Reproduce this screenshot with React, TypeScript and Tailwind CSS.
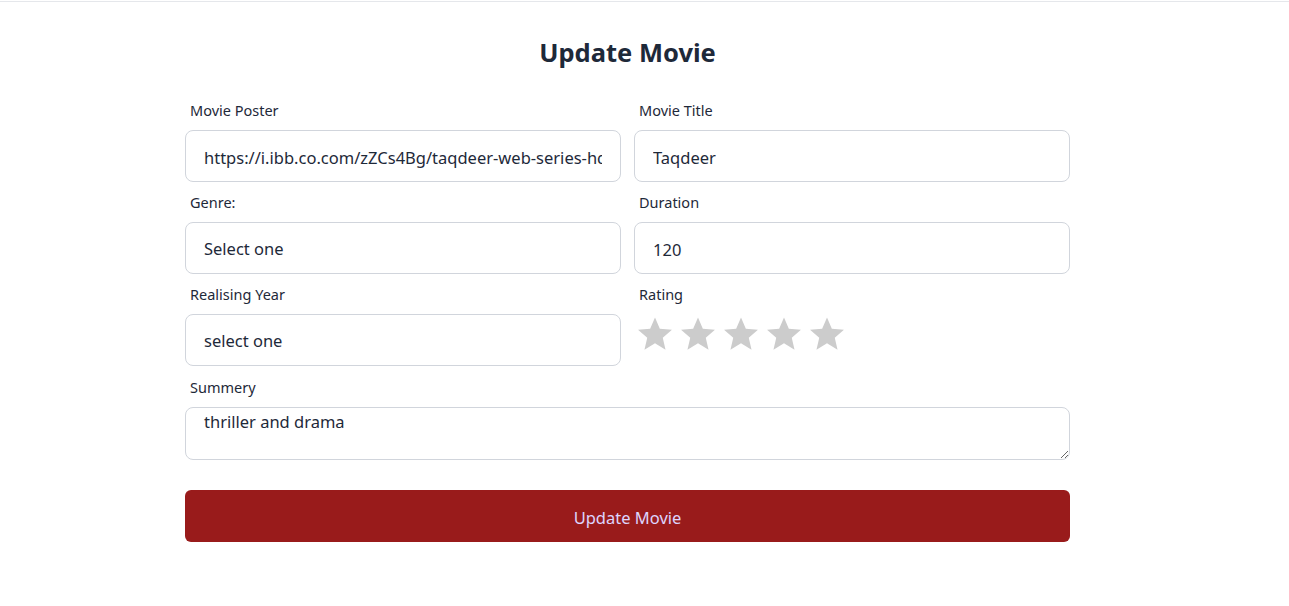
import React, { useState } from 'react';

const Star: React.FC<{ filled: boolean; onClick: () => void }> = ({ filled, onClick }) => (
  <button type="button" onClick={onClick} className="p-0 leading-none">
    <svg viewBox="0 0 24 24" className="w-[38px] h-[38px]">
      <path
        d="M12 1.6l3.05 7.05 7.65.68-5.8 5.05 1.75 7.5L12 17.9l-6.65 3.98 1.75-7.5-5.8-5.05 7.65-.68z"
        fill={filled ? '#f59e0b' : '#cccccc'}
      />
    </svg>
  </button>
);

const App: React.FC = () => {
  const [rating, setRating] = useState<number>(0);

  const inputClass =
    'w-full h-[52px] px-[18px] pt-[2px] border border-gray-300 rounded-lg text-[16.5px] text-gray-800 bg-white focus:outline-none';
  const labelClass = 'block text-[14.5px] leading-5 text-gray-800 px-[5px]';

  return (
    <div className="min-h-screen bg-white" style={{ fontFamily: '"Noto Sans", "Open Sans", sans-serif' }}>
      <div className="h-px mt-px bg-gray-200" />

      <div className="w-[885px] ml-[185px] pt-[34px] pb-16">
        <h1 className="text-[25.5px] font-bold text-gray-800 text-center leading-8">Update Movie</h1>

        <form className="mt-8" onSubmit={(e) => e.preventDefault()}>
          <div className="grid grid-cols-2 gap-x-[13px] gap-y-[10px]">
            {/* Movie Poster */}
            <div>
              <label className={`${labelClass} mb-[10px]`}>Movie Poster</label>
              <input
                type="text"
                defaultValue="https://i.ibb.co.com/zZCs4Bg/taqdeer-web-series-hd-poster.jpg"
                className={inputClass}
              />
            </div>

            {/* Movie Title */}
            <div>
              <label className={`${labelClass} mb-[10px]`}>Movie Title</label>
              <input type="text" defaultValue="Taqdeer" className={inputClass} />
            </div>

            {/* Genre */}
            <div>
              <label className={`${labelClass} mb-[10px]`}>Genre:</label>
              <div className={`${inputClass} flex items-center`}>Select one</div>
            </div>

            {/* Duration */}
            <div>
              <label className={`${labelClass} mb-[10px]`}>Duration</label>
              <input type="text" defaultValue="120" className={inputClass} />
            </div>

            {/* Realising Year */}
            <div>
              <label className={`${labelClass} mb-[10px]`}>Realising Year</label>
              <div className={`${inputClass} flex items-center`}>select one</div>
            </div>

            {/* Rating */}
            <div>
              <label className={`${labelClass} mb-[11px]`}>Rating</label>
              <div className="flex items-center gap-[5px] pl-[2px]">
                {[1, 2, 3, 4, 5].map((n) => (
                  <Star key={n} filled={n <= rating} onClick={() => setRating(n)} />
                ))}
              </div>
            </div>
          </div>

          {/* Summery */}
          <div className="mt-[11px]">
            <label className={`${labelClass} mb-[10px]`}>Summery</label>
            <textarea
              defaultValue="thriller and drama"
              className="block w-full h-[53px] px-[18px] pt-[2px] border border-gray-300 rounded-lg text-[16.5px] leading-6 text-gray-800 focus:outline-none"
            />
          </div>

          <button
            type="submit"
            className="mt-[30px] w-full h-[52px] pt-1 rounded-md bg-[#991b1b] text-violet-200 text-[16.5px]"
          >
            Update Movie
          </button>
        </form>
      </div>
    </div>
  );
};

export default App;
